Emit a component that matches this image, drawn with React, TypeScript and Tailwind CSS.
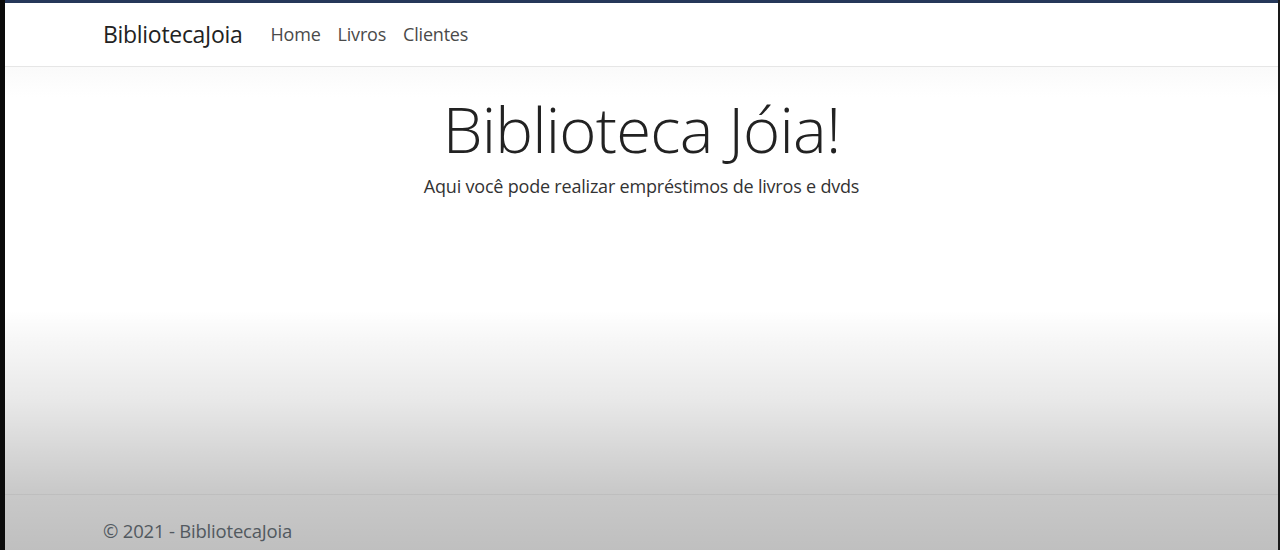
function App() {
  const links = ["Home", "Livros", "Clientes"];

  return (
    <div className="flex h-[550px] w-full overflow-hidden bg-[#0b0b0b] font-['Open_Sans',sans-serif]">
      <div className="w-[5px] shrink-0 bg-[#0b0b0b]" />
      <div className="relative flex flex-1 flex-col bg-white">
        <div className="h-[3px] shrink-0 bg-[#26385a]" />

        <nav className="flex h-[64px] shrink-0 items-center gap-[28px] border-b border-[#e6e6e6] bg-white px-[98px] shadow-[0_1px_3px_rgba(0,0,0,0.04)]">
          <a className="text-[23px] tracking-[-0.3px] text-[#222]">BibliotecaJoia</a>
          <ul className="flex items-center gap-[17px] text-[18px] tracking-[-0.2px] text-[#4a4a4a]">
            {links.map((l) => (
              <li key={l}>{l}</li>
            ))}
          </ul>
        </nav>

        <main className="flex flex-1 flex-col items-center bg-gradient-to-b from-[#fafafa] to-white to-[30px] pt-[20px]">
          <h1 className="text-[63.5px] font-light leading-[84px] tracking-[-0.8px] text-[#222]">Biblioteca Jóia!</h1>
          <p className="mt-[2px] text-[18px] tracking-[-0.2px] text-[#333]">Aqui você pode realizar empréstimos de livros e dvds</p>
        </main>

        <footer className="flex h-[56px] shrink-0 items-center border-t border-[#f2f2f2] px-[98px] pt-[16px] text-[18.5px] tracking-[-0.2px] text-[#6c757d]">
          © 2021 - BibliotecaJoia
        </footer>

        {/* video fade over the lower half */}
        <div className="pointer-events-none absolute inset-x-0 bottom-0 h-[240px] bg-[linear-gradient(to_bottom,rgba(0,0,0,0)_0%,rgba(0,0,0,0.03)_12%,rgba(0,0,0,0.09)_38%,rgba(0,0,0,0.21)_75%,rgba(0,0,0,0.25)_100%)]" />
      </div>
      <div className="w-[2px] shrink-0 bg-[#1a1a1a]" />
    </div>
  );
}

export default App;
